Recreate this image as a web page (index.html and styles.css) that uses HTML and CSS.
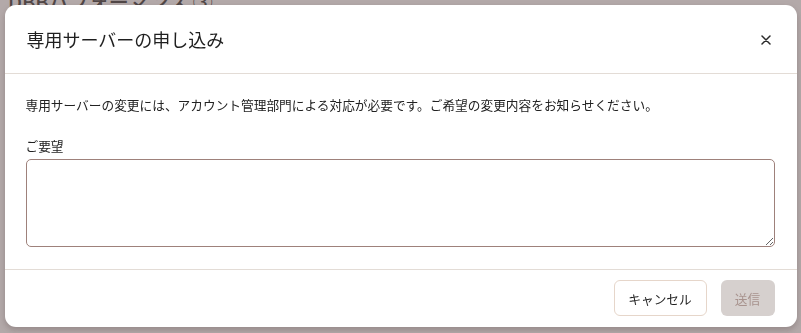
FILE: index.html
```html
<!DOCTYPE html>
<html lang="ja">
<head>
    <meta charset="UTF-8">
    <meta name="viewport" content="width=device-width, initial-scale=1.0">
    <title>専用サーバーの申し込み</title>
    <link rel="stylesheet" href="styles.css">
</head>
<body>
    <!-- Page behind the dialog -->
    <div class="page">
        <h2 class="page-title">DBBパフォーマンス ③</h2>
        <hr class="page-rule">
    </div>

    <!-- Dialog -->
    <div class="overlay">
        <div class="modal" role="dialog" aria-labelledby="modalTitle">
            <div class="modal-header">
                <h1 id="modalTitle" class="modal-title">専用サーバーの申し込み</h1>
                <button class="close-btn" aria-label="閉じる">
                    <svg width="10" height="10" viewBox="0 0 10 10">
                        <path d="M1 1 L9 9 M9 1 L1 9" stroke="#2b2b2b" stroke-width="1.5" stroke-linecap="round"/>
                    </svg>
                </button>
            </div>
            <div class="modal-body">
                <p class="modal-text">専用サーバーの変更には、アカウント管理部門による対応が必要です。ご希望の変更内容をお知らせください。</p>
                <label for="request" class="field-label">ご要望</label>
                <textarea id="request" class="field-input"></textarea>
            </div>
            <div class="modal-footer">
                <button class="btn btn-cancel">キャンセル</button>
                <button class="btn btn-submit" disabled>送信</button>
            </div>
        </div>
    </div>
</body>
</html>
```

FILE: styles.css
```css
html, body {
    margin: 0;
    height: 100%;
}
body {
    font-family: "Noto Sans CJK JP", "Noto Sans", sans-serif;
    color: #222;
    background: #fff;
    overflow: hidden;
}
.page {
    padding: 0 8px;
}
.page-title {
    margin: -13px 0 0;
    font-size: 20px;
    font-weight: 500;
    color: #333;
}
.page-rule {
    margin: 113px 0 0;
    border: none;
    border-top: 1px solid #ccc;
}
.overlay {
    position: fixed;
    inset: 0;
    background: rgba(110, 90, 90, 0.52);
    display: flex;
    justify-content: center;
    align-items: flex-start;
    padding-top: 5px;
}
.modal {
    width: 792px;
    height: 322px;
    background: #fff;
    border-radius: 11px;
    box-shadow: 0 3px 6px rgba(60, 40, 40, 0.25);
    display: flex;
    flex-direction: column;
    overflow: hidden;
}
.modal-header {
    height: 69px;
    flex: none;
    border-bottom: 1px solid #e3dcd6;
    display: flex;
    align-items: center;
    justify-content: space-between;
    padding: 0 26px 0 22px;
    box-sizing: border-box;
}
.modal-title {
    margin: 0;
    font-size: 18px;
    font-weight: 400;
    color: #1f1f1f;
}
.close-btn {
    border: none;
    background: none;
    padding: 0;
    width: 10px;
    height: 10px;
    display: flex;
    cursor: pointer;
    margin-top: 2px;
}
.modal-body {
    flex: none;
    padding: 21px 22px 0 21px;
    height: 196px;
    box-sizing: border-box;
    border-bottom: 1px solid #e3dcd6;
}
.modal-text {
    margin: 0;
    font-size: 12.7px;
    line-height: 20px;
    color: #222;
}
.field-label {
    display: block;
    margin-top: 21px;
    font-size: 12.7px;
    line-height: 20px;
    color: #222;
}
.field-input {
    display: block;
    margin-top: 3px;
    width: 100%;
    height: 88px;
    box-sizing: border-box;
    border: 1px solid #9e817b;
    border-radius: 5px;
    padding: 8px 10px;
    font-family: inherit;
    font-size: 13px;
    resize: vertical;
}
.modal-footer {
    flex: 1;
    display: flex;
    justify-content: flex-end;
    align-items: flex-start;
    gap: 14px;
    padding: 10px 22px 0;
}
.btn {
    height: 36px;
    border-radius: 6px;
    font-family: inherit;
    font-size: 12.7px;
    padding: 0;
    cursor: pointer;
}
.btn-cancel {
    width: 93px;
    background: #fff;
    border: 1px solid #e6d6ca;
    color: #1f1f1f;
}
.btn-submit {
    width: 54px;
    background: #d6d0ce;
    border: none;
    color: #a8938e;
    cursor: default;
}
```
